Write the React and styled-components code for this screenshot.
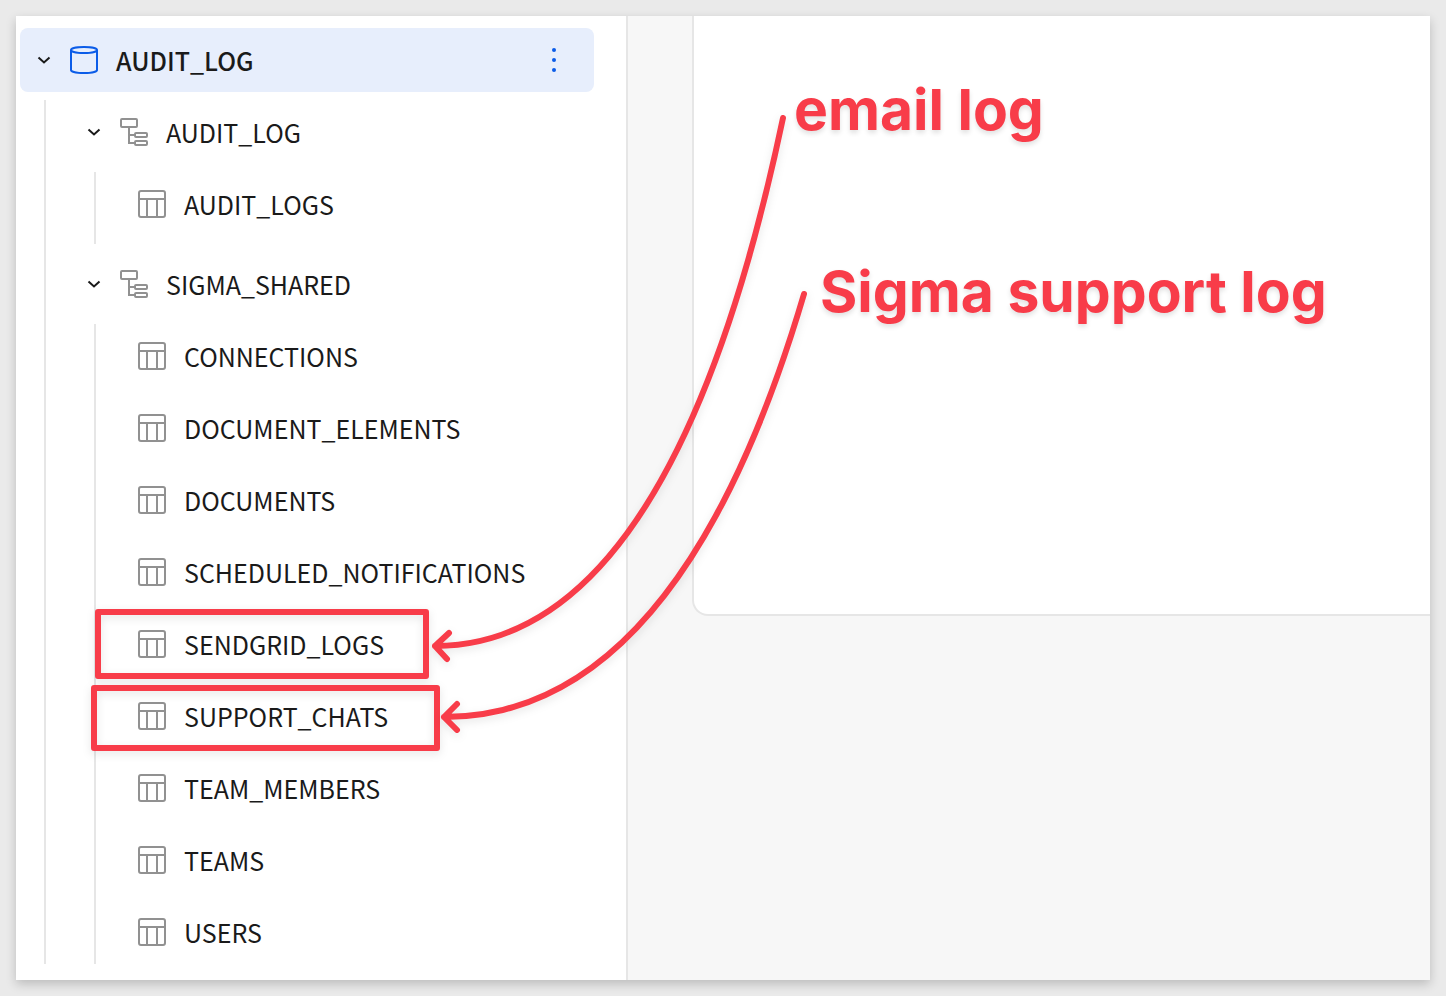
import React from "react";
import styled, { createGlobalStyle, css } from "styled-components";

const RED = "#f83c49";
const LINE = "#e6e6e6";

const GlobalStyle = createGlobalStyle`
  *, *::before, *::after { box-sizing: border-box; }
  body {
    margin: 0;
    background: #eaeaea;
    color: #1a1a1a;
    font-family: "Noto Sans CJK JP", "Noto Sans", sans-serif;
  }
`;

const Page = styled.div`
  position: relative;
  display: flex;
  min-height: 100vh;
  padding: 16px;
  overflow: hidden;
`;

const Window = styled.div`
  flex: 1;
  display: flex;
  min-width: 0;
  background: #f7f7f7;
  box-shadow: 0 4px 10px rgba(0, 0, 0, 0.2);
`;

const Sidebar = styled.nav`
  flex: none;
  width: 612px;
  padding: 12px 32px 16px 4px;
  background: #fff;
  border-right: 2px solid ${LINE};
`;

const Content = styled.main`
  flex: 1;
  min-width: 0;
  padding-left: 64px;
`;

const Card = styled.section`
  height: 600px;
  background: #fff;
  border: solid ${LINE};
  border-width: 0 0 2px 2px;
  border-bottom-left-radius: 16px;
`;

const Row = styled.div`
  display: flex;
  align-items: center;
  height: 64px;
  border-radius: 8px;
  ${(p) =>
    p.$selected &&
    css`
      background: #e7eefc;
      font-weight: 500;
    `}
`;

const RowButton = styled.button`
  flex: 1;
  display: flex;
  align-items: center;
  gap: ${(p) => (p.$leaf ? "16px" : "0")};
  height: 100%;
  padding: 0 0 0 ${(p) => (p.$leaf ? "40px" : "16px")};
  border: 0;
  background: none;
  color: inherit;
  font: inherit;
  font-size: 25px;
  line-height: 32px;
  text-align: left;
  white-space: nowrap;
  cursor: pointer;

  svg { flex: none; }
`;

const NodeIcon = styled.span`
  display: flex;
  margin: 0 16px;
`;

const MenuButton = styled.button`
  display: flex;
  align-items: center;
  justify-content: center;
  width: 32px;
  height: 32px;
  margin-right: 24px;
  padding: 0;
  border: 0;
  background: none;
  cursor: pointer;
`;

const Branch = styled.ul`
  display: flex;
  flex-direction: column;
  gap: 8px;
  margin: 8px 0 0 24px;
  padding: 0 0 ${(p) => (p.$spaced ? "8px" : "0")} ${(p) => (p.$nested ? "0" : "24px")};
  border-left: 2px solid ${LINE};
  list-style: none;
`;

const Annotations = styled.div`
  position: absolute;
  inset: 0;
  pointer-events: none;
`;

const Highlight = styled.div`
  position: absolute;
  left: ${(p) => p.$x}px;
  top: ${(p) => p.$y}px;
  width: ${(p) => p.$w}px;
  height: ${(p) => p.$h}px;
  border: 6px solid ${RED};
  border-radius: 3px;
  filter: drop-shadow(0 3px 4px rgba(0, 0, 0, 0.1));
`;

const Callout = styled.p`
  position: absolute;
  left: ${(p) => p.$x}px;
  top: ${(p) => p.$y}px;
  margin: 0;
  color: ${RED};
  font-family: Inter, sans-serif;
  font-size: 57px;
  font-weight: 700;
  line-height: 72px;
  white-space: nowrap;
  text-shadow: 0 3px 5px rgba(0, 0, 0, 0.12);
`;

const Arrows = styled.svg`
  position: absolute;
  left: 0;
  top: 0;
  overflow: visible;
  filter: drop-shadow(0 3px 4px rgba(0, 0, 0, 0.1));
`;

const Chevron = () => (
  <svg width="16" height="16" viewBox="0 0 16 16" fill="none" stroke="#1a1a1a" strokeWidth="2" aria-hidden="true">
    <path d="M2.500 5.500 8 10.500l5.500-5" />
  </svg>
);

const DatabaseIcon = () => (
  <svg width="32" height="32" viewBox="0 0 32 32" fill="none" stroke="#0b5ce8" strokeWidth="2" aria-hidden="true">
    <ellipse cx="16" cy="6" rx="13" ry="3" />
    <path d="M3 6v20c0 1.700 5.800 3 13 3s13-1.300 13-3V6" />
  </svg>
);

const SchemaIcon = () => (
  <svg width="32" height="32" viewBox="0 0 32 32" fill="none" stroke="#919191" strokeWidth="2" aria-hidden="true">
    <rect x="3" y="3" width="16" height="8" rx="1" />
    <path d="M11 11v16h5M11 19h5" />
    <rect x="17" y="17" width="12" height="4" rx="1" />
    <rect x="17" y="25" width="12" height="4" rx="1" />
  </svg>
);

const TableIcon = () => (
  <svg width="32" height="32" viewBox="0 0 32 32" fill="none" stroke="#919191" strokeWidth="2" aria-hidden="true">
    <rect x="3" y="3" width="26" height="26" rx="2" />
    <path d="M3 11h26M11 11v18M21 11v18" />
  </svg>
);

const DotsIcon = () => (
  <svg width="32" height="32" viewBox="0 0 32 32" fill="#0b5ce8" aria-hidden="true">
    <circle cx="16" cy="6" r="2" />
    <circle cx="16" cy="16" r="2" />
    <circle cx="16" cy="26" r="2" />
  </svg>
);

const schemas = [
  { name: "AUDIT_LOG", tables: ["AUDIT_LOGS"] },
  {
    name: "SIGMA_SHARED",
    tables: [
      "CONNECTIONS",
      "DOCUMENT_ELEMENTS",
      "DOCUMENTS",
      "SCHEDULED_NOTIFICATIONS",
      "SENDGRID_LOGS",
      "SUPPORT_CHATS",
      "TEAM_MEMBERS",
      "TEAMS",
      "USERS",
    ],
  },
];

function Parent({ name, icon, selected, children }) {
  return (
    <Row $selected={selected}>
      <RowButton type="button" aria-expanded="true">
        <Chevron />
        <NodeIcon>{icon}</NodeIcon>
        {name}
      </RowButton>
      {children}
    </Row>
  );
}

export default function App() {
  return (
    <>
      <GlobalStyle />
      <Page>
        <Window>
          <Sidebar aria-label="Data sources">
            <Parent name="AUDIT_LOG" icon={<DatabaseIcon />} selected>
              <MenuButton type="button" aria-label="More options">
                <DotsIcon />
              </MenuButton>
            </Parent>
            <Branch>
              {schemas.map((schema, i) => (
                <li key={schema.name}>
                  <Parent name={schema.name} icon={<SchemaIcon />} />
                  <Branch $nested $spaced={i < schemas.length - 1}>
                    {schema.tables.map((table) => (
                      <li key={table}>
                        <Row>
                          <RowButton type="button" $leaf>
                            <TableIcon />
                            {table}
                          </RowButton>
                        </Row>
                      </li>
                    ))}
                  </Branch>
                </li>
              ))}
            </Branch>
          </Sidebar>
          <Content>
            <Card />
          </Content>
        </Window>
        <Annotations>
          <Highlight $x={95} $y={609} $w={334} $h={70} />
          <Highlight $x={91} $y={685} $w={349} $h={66} />
          <Arrows width="860" height="780" fill="none" stroke={RED} strokeWidth="6" strokeLinecap="round" strokeLinejoin="round" aria-hidden="true">
            <path d="M783 118Q672 646 435 646M449 633l-14 13 12 13" />
            <path d="M804 294Q679 717 444 717M457 704l-13 13 13 13" />
          </Arrows>
          <Callout $x={794} $y={74}>email log</Callout>
          <Callout $x={820} $y={256}>Sigma support log</Callout>
        </Annotations>
      </Page>
    </>
  );
}
